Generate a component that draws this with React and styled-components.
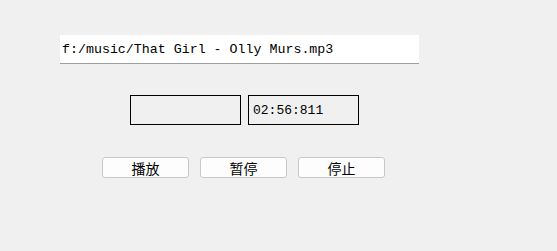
import React from "react";
import styled, { createGlobalStyle } from "styled-components";

const GlobalStyle = createGlobalStyle`
  html, body {
    margin: 0;
    padding: 0;
    background: #f0f0f0;
  }
`;

const App = () => {
  return (
    <>
      <GlobalStyle />
      <Window>
        <PathField>f:/music/That Girl - Olly Murs.mp3</PathField>
        <TimeRow>
          <TimeBox />
          <TimeBox>02:56:811</TimeBox>
        </TimeRow>
        <ButtonRow>
          <Button>播放</Button>
          <Button>暂停</Button>
          <Button>停止</Button>
        </ButtonRow>
      </Window>
    </>
  );
};

const Window = styled.div`
  width: 557px;
  height: 251px;
  background: #f0f0f0;
  display: flex;
  flex-direction: column;
  padding: 35px 0 0 60px;
  box-sizing: border-box;
`;

const PathField = styled.div`
  width: 359px;
  height: 29px;
  box-sizing: border-box;
  background: #ffffff;
  border-bottom: 1px solid #a0a0a0;
  font-family: "Liberation Mono", "DejaVu Sans Mono", monospace;
  font-size: 13.3px;
  color: #000;
  display: flex;
  align-items: center;
  padding-left: 2px;
  white-space: nowrap;
`;

const TimeRow = styled.div`
  display: flex;
  gap: 7px;
  margin: 31px 0 0 70px;
`;

const TimeBox = styled.div`
  width: 111px;
  height: 30px;
  box-sizing: border-box;
  border: 1px solid #000;
  font-family: "Liberation Mono", "DejaVu Sans Mono", monospace;
  font-size: 13px;
  color: #000;
  display: flex;
  align-items: center;
  padding-left: 4px;
`;

const ButtonRow = styled.div`
  display: flex;
  gap: 11px;
  margin: 32px 0 0 42px;
`;

const Button = styled.button`
  width: 87px;
  height: 21px;
  box-sizing: border-box;
  background: #fdfdfd;
  border: 1px solid #c8c8c8;
  border-radius: 3px;
  padding: 0;
  font-family: "Noto Sans CJK SC", sans-serif;
  font-size: 14px;
  line-height: 1;
  color: #000;
  display: flex;
  align-items: center;
  justify-content: center;
`;

export default App;
